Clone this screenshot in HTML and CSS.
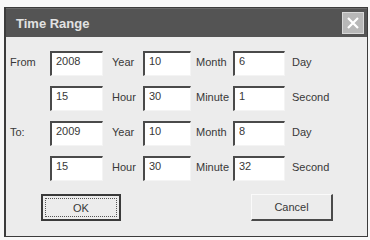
FILE: index.html
```html
<!DOCTYPE html>
<html lang="en">
  <head>
    <meta charset="utf-8">
    <title>Time Range</title>
    <link rel="stylesheet" href="styles.css">
  </head>
  <body>
    <div class="trWindow">
      <div class="trTitlebar">
        <span class="trTitle">Time Range</span>
        <span class="trClose">
          <svg width="14" height="14" viewBox="0 0 14 14">
            <path d="M2 2 L12 12 M12 2 L2 12" stroke="#fff" stroke-width="2.2" fill="none"/>
          </svg>
        </span>
      </div>

      <div class="trContent">
        <div class="trGrid">
          <span class="trLabel">From</span>
          <input class="trInput" type="text" value="2008">
          <span class="trLabel trUnit1">Year</span>
          <input class="trInput" type="text" value="10">
          <span class="trLabel trUnit2">Month</span>
          <input class="trInput" type="text" value="6">
          <span class="trLabel trUnit3">Day</span>

          <span class="trLabel"></span>
          <input class="trInput" type="text" value="15">
          <span class="trLabel trUnit1">Hour</span>
          <input class="trInput" type="text" value="30">
          <span class="trLabel trUnit2">Minute</span>
          <input class="trInput" type="text" value="1">
          <span class="trLabel trUnit3">Second</span>

          <span class="trLabel">To:</span>
          <input class="trInput" type="text" value="2009">
          <span class="trLabel trUnit1">Year</span>
          <input class="trInput" type="text" value="10">
          <span class="trLabel trUnit2">Month</span>
          <input class="trInput" type="text" value="8">
          <span class="trLabel trUnit3">Day</span>

          <span class="trLabel"></span>
          <input class="trInput" type="text" value="15">
          <span class="trLabel trUnit1">Hour</span>
          <input class="trInput" type="text" value="30">
          <span class="trLabel trUnit2">Minute</span>
          <input class="trInput" type="text" value="32">
          <span class="trLabel trUnit3">Second</span>
        </div>

        <div class="trButtons">
          <button class="trButton trDefault"><span class="trFocus">OK</span></button>
          <button class="trButton trCancel">Cancel</button>
        </div>
      </div>
    </div>
  </body>
</html>
```

FILE: styles.css
```css
body {
  margin: 0;
  background-color: #f8f8f8;
  font-family: "Liberation Sans", Arial, sans-serif;
  font-size: 11px;
  color: #383838;
}

.trWindow {
  margin: 7px 0 0 4px;
  width: 364px;
  height: 230px;
  box-sizing: border-box;
  border: 1px solid #3c3c3c;
  border-left-width: 2px;
  background-color: #ececec;
}

.trTitlebar {
  height: 29px;
  background-color: #545454;
  border-top: 1px solid #6a6a6a;
  box-sizing: border-box;
  display: flex;
  align-items: center;
  justify-content: space-between;
  padding: 0 3px 0 10px;
}

.trTitle {
  color: #e2e2e2;
  font-size: 13px;
  font-weight: bold;
}

.trClose {
  width: 20px;
  height: 20px;
  background-color: #b8b8b8;
  border: 1px solid #d8d8d8;
  display: flex;
  align-items: center;
  justify-content: center;
}

.trContent {
  padding: 14px 0 0 4px;
}

.trGrid {
  display: grid;
  grid-template-columns: 40px 53px 40px 48px 42px 52px auto;
  grid-auto-rows: 25px;
  row-gap: 10px;
}

.trLabel {
  padding-top: 4px;
  line-height: 14px;
  white-space: nowrap;
}
.trUnit1 { padding-left: 9px; }
.trUnit2 { padding-left: 5px; }
.trUnit3 { padding-left: 7px; }

.trInput {
  width: 100%;
  height: 25px;
  box-sizing: border-box;
  margin: 0;
  border-top: 2px solid #4a4a4a;
  border-left: 2px solid #4a4a4a;
  border-right: 1px solid #f4f4f4;
  border-bottom: 1px solid #f4f4f4;
  background-color: #fff;
  font-family: "Liberation Sans", Arial, sans-serif;
  font-size: 11px;
  color: #383838;
  padding: 0 4px 7px;
}

.trButtons {
  display: flex;
  margin-top: 13px;
  padding-left: 31px;
}

.trButton {
  height: 27px;
  box-sizing: border-box;
  background-color: #ececec;
  border-top: 1px solid #fafafa;
  border-left: 1px solid #fafafa;
  border-right: 2px solid #4a4a4a;
  border-bottom: 2px solid #4a4a4a;
  font-family: "Liberation Sans", Arial, sans-serif;
  font-size: 11px;
  color: #383838;
  padding: 0;
}

.trDefault {
  width: 80px;
  border: 2px solid #3a3a3a;
  padding: 2px;
  display: flex;
}

.trFocus {
  flex: 1;
  border: 1px dotted #555;
  display: flex;
  align-items: center;
  justify-content: center;
}

.trCancel {
  width: 82px;
  margin-left: 130px;
}
```
